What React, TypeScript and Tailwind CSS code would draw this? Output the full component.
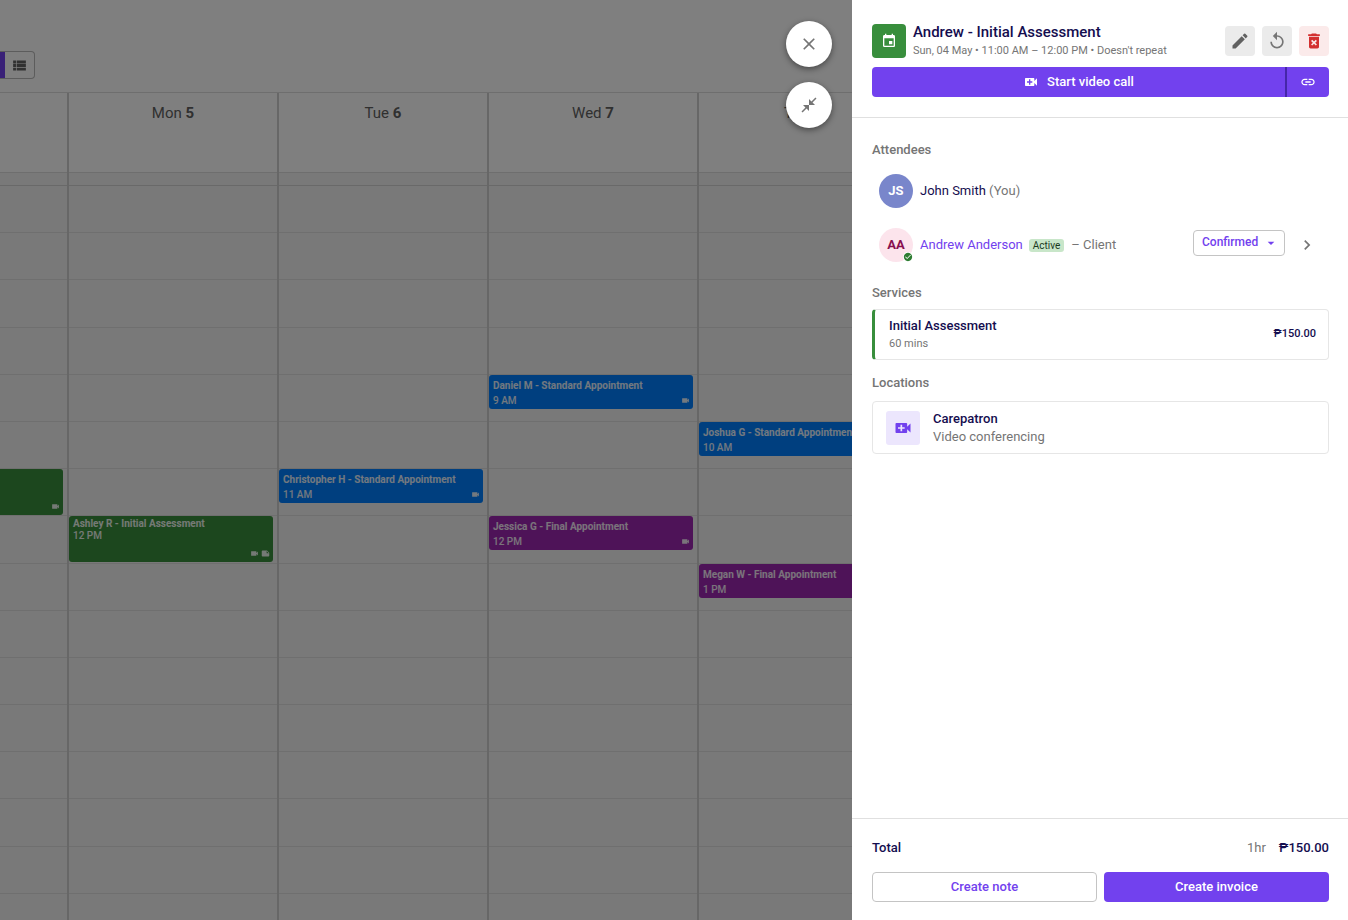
import {
  MdArrowDropDown,
  MdCheckCircle,
  MdChevronRight,
  MdClose,
  MdCloseFullscreen,
  MdDeleteForever,
  MdEdit,
  MdEvent,
  MdLink,
  MdNote,
  MdReplay,
  MdVideoCall,
  MdVideocam,
  MdViewList,
} from "react-icons/md";

type Appointment = {
  hour: number;
  title: string;
  time: string;
  color: string;
  tall?: boolean;
  note?: boolean;
};

type Day = { name: string; date: number; appointments: Appointment[] };

const HOURS = [5, 6, 7, 8, 9, 10, 11, 12, 13, 14, 15, 16, 17, 18, 19, 20];

const DAYS: Day[] = [
  {
    name: "Sun",
    date: 4,
    appointments: [
      { hour: 11, title: "Andrew A - Initial Assessment", time: "11 AM", color: "bg-[#388e3c]", tall: true },
    ],
  },
  {
    name: "Mon",
    date: 5,
    appointments: [
      { hour: 12, title: "Ashley R - Initial Assessment", time: "12 PM", color: "bg-[#388e3c]", tall: true, note: true },
    ],
  },
  {
    name: "Tue",
    date: 6,
    appointments: [
      { hour: 11, title: "Christopher H - Standard Appointment", time: "11 AM", color: "bg-[#007fff]" },
    ],
  },
  {
    name: "Wed",
    date: 7,
    appointments: [
      { hour: 9, title: "Daniel M - Standard Appointment", time: "9 AM", color: "bg-[#007fff]" },
      { hour: 12, title: "Jessica G - Final Appointment", time: "12 PM", color: "bg-[#9c27b0]" },
    ],
  },
  {
    name: "Thu",
    date: 8,
    appointments: [
      { hour: 10, title: "Joshua G - Standard Appointment", time: "10 AM", color: "bg-[#007fff]" },
      { hour: 13, title: "Megan W - Final Appointment", time: "1 PM", color: "bg-[#9c27b0]" },
    ],
  },
];

function AppointmentCard({ item }: { item: Appointment }) {
  return (
    <div
      className={`mr-1 flex justify-between rounded-[3px] pl-1 pr-[3px] text-[10px] font-medium text-white/90 ${item.color} ${item.tall ? "h-[46px] pt-[2px] leading-3" : "h-[34px] pt-[3px] leading-[15px]"}`}
    >
      <div className="whitespace-nowrap">
        <p className="font-bold">{item.title}</p>
        <p>{item.time}</p>
      </div>
      <div className="flex items-end gap-[2px] pb-1">
        <MdVideocam className="size-[9px]" />
        {item.note && <MdNote className="size-[9px]" />}
      </div>
    </div>
  );
}

function Calendar() {
  return (
    <div className="flex h-full flex-col bg-white">
      {/* toolbar */}
      <div className="flex h-[93px] shrink-0 items-start border-b border-[#dcdcdc] pt-[51px]">
        <div className="flex h-7 overflow-hidden rounded-r border border-l-0 border-[#b8b8b8]">
          <span className="w-[5px] bg-[#7241ee]" />
          <button className="flex w-[29px] items-center justify-center text-[#616161]" aria-label="List view">
            <MdViewList className="size-[17px]" />
          </button>
        </div>
      </div>

      {/* day columns, scrolled part way into Sunday */}
      <div className="-ml-[141px] flex flex-1">
        {DAYS.map((day) => (
          <section key={day.name} className="flex w-[210px] shrink-0 flex-col border-r-2 border-[#cfcfcf] bg-[#f3f3f3]">
            <h2 className="h-20 shrink-0 border-b border-[#dcdcdc] bg-white pt-2 text-center text-[15px] leading-6 text-[#616161]">
              {day.name} <b>{day.date}</b>
            </h2>
            <div className="h-[13px] shrink-0 border-b border-[#d2d2d2]" />
            <div className="grid h-[755px] shrink-0 grid-rows-[repeat(16,1fr)]">
              {HOURS.map((hour) => (
                <div key={hour} className="border-b border-[#dfdfdf]">
                  {day.appointments
                    .filter((a) => a.hour === hour)
                    .map((a) => (
                      <AppointmentCard key={a.title} item={a} />
                    ))}
                </div>
              ))}
            </div>
          </section>
        ))}
      </div>
    </div>
  );
}

function DrawerHeader() {
  return (
    <header className="border-b border-[#e0e0e0] pb-5 pl-5 pr-[19px] pt-[22px]">
      <div className="flex items-center">
        <span className="flex size-[34px] items-center justify-center rounded bg-[#388e3c] text-white">
          <MdEvent className="size-4" />
        </span>
        <div className="ml-[7px] flex-1">
          <h1 className="text-[15px] font-medium leading-5 text-[#140d4f]">Andrew - Initial Assessment</h1>
          <p className="text-[11px] leading-[18px] text-[#757575]">
            Sun, 04 May • 11:00 AM – 12:00 PM • Doesn't repeat
          </p>
        </div>
        <div className="flex gap-[7px]">
          <button className="flex size-[30px] items-center justify-center rounded bg-[#ebebeb] text-[#616161]" aria-label="Edit">
            <MdEdit className="size-5" />
          </button>
          <button className="flex size-[30px] items-center justify-center rounded bg-[#ebebeb] text-[#757575]" aria-label="Restore">
            <MdReplay className="size-5" />
          </button>
          <button className="flex size-[30px] items-center justify-center rounded bg-[#fbeaea] text-[#d32f2f]" aria-label="Delete">
            <MdDeleteForever className="size-5" />
          </button>
        </div>
      </div>
      <div className="mt-[7px] flex h-[30px] overflow-hidden rounded bg-[#7241ee] text-white">
        <button className="flex flex-1 items-center justify-center gap-2 border-r-2 border-[#4526a8] text-[13px] font-medium">
          <MdVideoCall className="size-4" />
          Start video call
        </button>
        <button className="flex w-[42px] items-center justify-center" aria-label="Copy call link">
          <MdLink className="size-4" />
        </button>
      </div>
    </header>
  );
}

function SectionTitle({ children }: { children: string }) {
  return <h2 className="text-[13px] font-medium leading-5 text-[#757575]">{children}</h2>;
}

function Attendees() {
  return (
    <section>
      <SectionTitle>Attendees</SectionTitle>
      <ul className="mt-[14px] space-y-5 pl-[7px] text-[13px] text-[#757575]">
        <li className="flex items-center">
          <span className="flex size-[34px] items-center justify-center rounded-full bg-[#7986cb] font-bold text-white">JS</span>
          <span className="ml-[7px]">
            <span className="text-[#140d4f]">John Smith</span> (You)
          </span>
        </li>
        <li className="flex items-center">
          <span className="relative flex size-[34px] items-center justify-center rounded-full bg-[#fce4ec] font-bold text-[#880e4f]">
            AA
            <MdCheckCircle className="absolute bottom-0 right-0 size-[10px] rounded-full bg-white text-[#2e7d32]" />
          </span>
          <a href="#client" className="ml-[7px] text-[#7241ee]">
            Andrew Anderson
          </a>
          <span className="ml-[6px] rounded-[3px] bg-[#c8e6c9] px-1 text-[10px] leading-[13px] text-[#1b3a1d]">Active</span>
          <span className="ml-[7px]">– Client</span>
          <label className="relative -mt-1 ml-auto flex">
            <select
              aria-label="Attendance status"
              className="h-[26px] w-[92px] appearance-none rounded border border-[#c4c4c4] bg-white pb-[3px] pl-2 text-[12px] font-medium text-[#7241ee]"
            >
              <option>Confirmed</option>
              <option>Pending</option>
              <option>Cancelled</option>
            </select>
            <MdArrowDropDown className="pointer-events-none absolute right-[6px] top-[5px] size-4 text-[#7241ee]" />
          </label>
          <button className="ml-3 mr-3 text-[#757575]" aria-label="Open attendee">
            <MdChevronRight className="size-5" />
          </button>
        </li>
      </ul>
    </section>
  );
}

function Services() {
  return (
    <section className="mt-[21px]">
      <SectionTitle>Services</SectionTitle>
      <div className="mt-[6px] flex h-[51px] items-center rounded border border-l-[3px] border-[#e6e6e6] border-l-[#388e3c]">
        <div className="ml-[14px] flex-1">
          <h3 className="text-[13px] font-medium leading-[18px] text-[#140d4f]">Initial Assessment</h3>
          <p className="text-[11px] leading-[17px] text-[#757575]">60 mins</p>
        </div>
        <span className="mr-3 text-[11px] font-medium text-[#140d4f]">₱150.00</span>
      </div>
    </section>
  );
}

function Locations() {
  return (
    <section className="mt-[13px]">
      <SectionTitle>Locations</SectionTitle>
      <div className="mt-2 flex h-[53px] items-center rounded border border-[#e6e6e6] pl-[13px]">
        <span className="flex size-[34px] items-center justify-center rounded-[3px] bg-[#ece6fd] text-[#7241ee]">
          <MdVideoCall className="size-5" />
        </span>
        <div className="ml-[13px]">
          <h3 className="text-[13px] font-medium leading-[18px] text-[#140d4f]">Carepatron</h3>
          <p className="text-[13px] leading-[18px] text-[#757575]">Video conferencing</p>
        </div>
      </div>
    </section>
  );
}

function DrawerFooter() {
  return (
    <footer className="border-t border-[#e0e0e0] pb-[18px] pl-5 pr-[19px] pt-[19px] text-[13px]">
      <div className="flex leading-5">
        <span className="flex-1 font-medium text-[#140d4f]">Total</span>
        <span className="text-[#757575]">1hr</span>
        <span className="ml-[13px] font-medium text-[#140d4f]">₱150.00</span>
      </div>
      <div className="mt-[14px] grid grid-cols-2 gap-[7px] font-medium">
        <button className="h-[30px] rounded border border-[#c4c4c4] text-[#7241ee]">Create note</button>
        <button className="h-[30px] rounded bg-[#7241ee] text-white">Create invoice</button>
      </div>
    </footer>
  );
}

export default function App() {
  return (
    <div className="flex h-screen overflow-hidden font-['Roboto',sans-serif]">
      <main className="relative min-w-0 flex-1 overflow-hidden">
        <Calendar />
        {/* backdrop with the drawer's floating controls */}
        <div className="absolute inset-0 bg-black/50">
          <div className="absolute right-5 top-[21px] flex flex-col gap-[15px]">
            <button
              className="flex size-[46px] items-center justify-center rounded-full bg-white text-[#757575] shadow-[0_2px_6px_rgba(0,0,0,0.45)]"
              aria-label="Close"
            >
              <MdClose className="size-5" />
            </button>
            <button
              className="flex size-[46px] items-center justify-center rounded-full bg-white text-[#757575] shadow-[0_2px_6px_rgba(0,0,0,0.45)]"
              aria-label="Collapse"
            >
              <MdCloseFullscreen className="size-[18px]" />
            </button>
          </div>
        </div>
      </main>

      <aside className="flex w-[496px] shrink-0 flex-col bg-white">
        <DrawerHeader />
        <div className="flex-1 pl-5 pr-[19px] pt-[22px]">
          <Attendees />
          <Services />
          <Locations />
        </div>
        <DrawerFooter />
      </aside>
    </div>
  );
}
